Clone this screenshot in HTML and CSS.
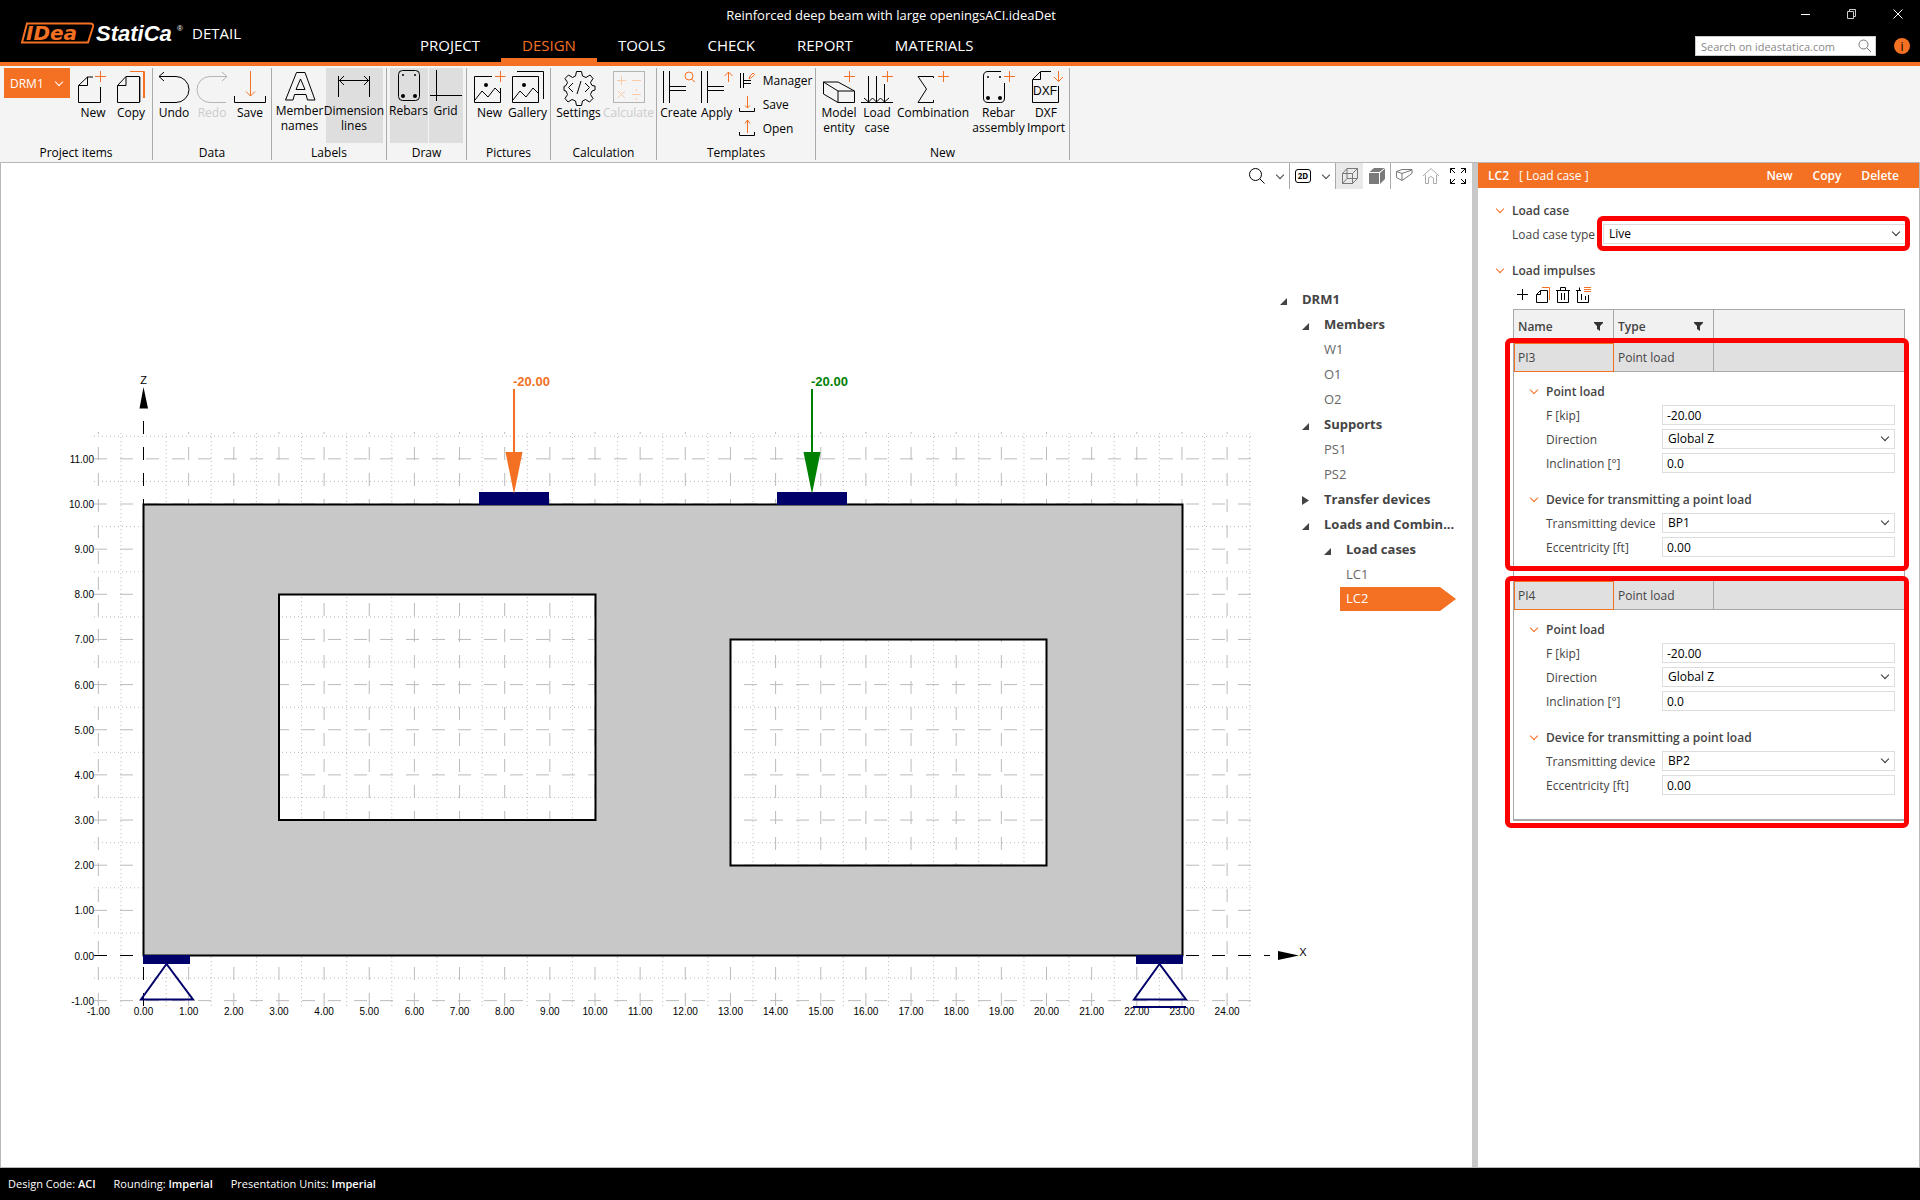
FILE: index.html
```html
<!DOCTYPE html>
<html lang="en">
<head>
    <meta charset="utf-8">
    <title>Reinforced deep beam with large openingsACI.ideaDet</title>
    <link rel="stylesheet" href="styles.css">
    <script src="script.js" defer></script>
</head>
<body>
    <header class="titlebar">
        <div class="brand">
            <svg class="logo" width="170" height="24" viewBox="0 0 170 24">
                <path d="M7 2.500H70Q74 2.500 73 6L68 21.500H2Z" fill="#000" stroke="#f47023" stroke-width="2"/>
                <text x="6" y="19" class="logo-idea">IDea</text>
                <text x="76" y="20" class="logo-statica">StatiCa</text>
                <text x="157" y="10" class="logo-reg">®</text>
            </svg>
            <span class="product">DETAIL</span>
        </div>
        <nav class="tabs">
            <a href="#">PROJECT</a>
            <a href="#" class="active">DESIGN</a>
            <a href="#">TOOLS</a>
            <a href="#">CHECK</a>
            <a href="#">REPORT</a>
            <a href="#">MATERIALS</a>
        </nav>
        <h1 class="doc-title">Reinforced deep beam with large openingsACI.ideaDet</h1>
        <div class="header-right">
            <div class="window-buttons">
                <button aria-label="Minimize"><svg width="12" height="12" viewBox="0 0 12 12"><path d="M1 6.500h9" stroke="#fff"/></svg></button>
                <button aria-label="Restore"><svg width="12" height="12" viewBox="0 0 12 12"><path d="M1.500 3.500h6v7h-6zM3.500 3.500v-2h6v7h-2" fill="none" stroke="#ccc"/></svg></button>
                <button aria-label="Close"><svg width="12" height="12" viewBox="0 0 12 12"><path d="M1.500 1.500l9 9M10.500 1.500l-9 9" stroke="#fff"/></svg></button>
            </div>
            <div class="search-row">
                <div class="search">
                    <input type="text" aria-label="Search" placeholder="Search on ideastatica.com">
                    <svg width="14" height="14" viewBox="0 0 14 14"><path d="M9 9l4 4M10 5.500a4.500 4.500 0 1 1-9 0 4.500 4.500 0 0 1 9 0z" fill="none" stroke="#777"/></svg>
                </div>
                <button class="info" aria-label="Info">i</button>
            </div>
        </div>
    </header>

    <div class="ribbon">
        <section class="group g-project">
            <div class="tools">
                <button class="project-item">DRM1 <i class="chevron"></i></button>
                <button class="tool">
                    <svg class="icon" viewBox="0 0 32 32"><path class="k" d="M16 6H10.500L1.500 14.500V31.500H23.500V16M10.500 6V14.500H1.500"/><path class="o" d="M18 5.500H29M23.500 0V11"/></svg>
                    <span>New</span>
                </button>
                <button class="tool">
                    <svg class="icon" viewBox="0 0 32 32"><path class="k" d="M11 5.500H24.500V31.500H2.500V14.500L11 5.500V14.500H2.500"/><path d="M25.500 6v25" stroke="#999"/><path class="o" d="M15 .500H29.500V27M28.500 1V27"/></svg>
                    <span>Copy</span>
                </button>
            </div>
            <h2>Project items</h2>
        </section>
        <section class="group g-data">
            <div class="tools">
                <button class="tool">
                    <svg class="icon" viewBox="0 0 32 32"><path class="k" d="M6 1L1 5.500L6 10M1 5.500H18A13 13 0 0 1 18 31.500H2"/></svg>
                    <span>Undo</span>
                </button>
                <button class="tool" disabled>
                    <svg class="icon" viewBox="0 0 32 32"><path class="g" d="M26 1L31 5.500L26 10M31 5.500H14A13 13 0 0 0 14 31.500H30"/></svg>
                    <span>Redo</span>
                </button>
                <button class="tool">
                    <svg class="icon" viewBox="0 0 32 32"><path class="k" d="M.500 25V31.500H31.500V25"/><path class="o" d="M16.500 0V25M12 20.500L16.500 25L21 20.500"/></svg>
                    <span>Save</span>
                </button>
            </div>
            <h2>Data</h2>
        </section>
        <section class="group g-labels">
            <div class="tools">
                <button class="tool toggle w-mid">
                    <svg class="icon" viewBox="0 0 32 32"><path class="k" d="M12.500 3.500H21L31 31H23.500L22 25.500H10.500L9 31H1.500ZM16.500 10L12 20.500H21Z"/></svg>
                    <span>Member names</span>
                </button>
                <button class="tool toggle on w-wide">
                    <svg class="icon" viewBox="0 0 32 32"><path class="k" d="M.500 7V28M31.500 7V28M1 11.500H31M6 7L1.500 11.500L6 16M26 7L30.500 11.500L26 16"/></svg>
                    <span>Dimension lines</span>
                </button>
            </div>
            <h2>Labels</h2>
        </section>
        <section class="group g-draw">
            <div class="tools">
                <button class="tool toggle on">
                    <svg class="icon" viewBox="0 0 32 32"><rect class="k" x="5.500" y="1.500" width="21" height="30" rx="4"/><g fill="#000"><circle cx="10" cy="6" r="1"/><circle cx="22" cy="6" r="1"/><circle cx="10" cy="27" r="2"/><circle cx="22" cy="27" r="2"/></g></svg>
                    <span>Rebars</span>
                </button>
                <button class="tool toggle on w-slim">
                    <svg class="icon" viewBox="0 0 32 32"><path class="k" d="M6.500 1V32M0 26.500H32"/></svg>
                    <span>Grid</span>
                </button>
            </div>
            <h2>Draw</h2>
        </section>
        <section class="group g-pictures">
            <div class="tools">
                <button class="tool">
                    <svg class="icon" viewBox="0 0 32 32"><path class="k" d="M18 5.500H.500V31.500H26.500V17M1 29L8 20L14 26L21 17L26 22"/><circle cx="12" cy="14" r="2"/><path class="o" d="M21 5.500H31.500M26.500 0V11"/></svg>
                    <span>New</span>
                </button>
                <button class="tool">
                    <svg class="icon" viewBox="0 0 32 32"><path class="k" d="M.500 5.500H26.500V31.500H.500ZM5 .500H31.500V28M1 29L8 20L14 26L21 17L26 22"/><circle cx="12" cy="14" r="2"/></svg>
                    <span>Gallery</span>
                </button>
            </div>
            <h2>Pictures</h2>
        </section>
        <section class="group g-calc">
            <div class="tools">
                <button class="tool w-mid">
                    <svg class="icon" viewBox="0 0 32 32"><path class="k" d="M13.500 .500h5l1 4.500 3.500 1.500 4-2.500 3 3.500-2.500 4 1.500 3 3 .500v4l-3 1-1.500 3.500 2.500 4-3.500 3.500-4-2.500-3 1.500-1 4.500h-5l-1-4.500-3.500-1.500-4 2.500-3-3.500 2.500-4-1.500-3.500-2-.500v-4l2-1 1.500-3-2.500-4 3.500-3.500 4 2.500 3-1.500zM10 12L5.500 16.500L10 21M22 12L26.500 16.500L22 21M18 10L14 23"/></svg>
                    <span>Settings</span>
                </button>
                <button class="tool w-mid" disabled>
                    <svg class="icon" viewBox="0 0 32 32"><rect class="g" x=".500" y=".500" width="31" height="31"/><path d="M4 9.500H13M8.500 5V14M19 9.500H28M5 20L12 27M12 20L5 27M19 23.500H28M23.500 18v2M23.500 27v2" fill="none" stroke="#f9cba9"/></svg>
                    <span>Calculate</span>
                </button>
            </div>
            <h2>Calculation</h2>
        </section>
        <section class="group g-templates">
            <div class="tools">
                <button class="tool">
                    <svg class="icon" viewBox="0 0 32 32"><path class="k" d="M.500 0V32M6.500 0V32M7 15.500H23M7 19.500H23"/><circle class="o" cx="26" cy="5" r="4"/><path class="o" d="M28.500 8L32 11"/></svg>
                    <span>Create</span>
                </button>
                <button class="tool">
                    <svg class="icon" viewBox="0 0 32 32"><path class="k" d="M.500 0V32M6.500 0V32M7 15.500H23M7 19.500H23"/><path class="o" d="M27.500 11V1M23.500 5L27.500 1L31.500 5"/></svg>
                    <span>Apply</span>
                </button>
                <div class="small-tools">
                    <button><svg width="16" height="16" viewBox="0 0 16 16"><path class="k" d="M1.500 1V16M4.500 1V16M5 8.500H12M5 11.500H12"/><path class="o" d="M10 7l1-3 3-3 1.500 1.500-3 3z"/></svg>Manager</button>
                    <button><svg width="16" height="16" viewBox="0 0 16 16"><path class="k" d="M.500 12V15.500H15.500V12"/><path class="o" d="M8.500 0V12M6 9.500L8.500 12L11 9.500"/></svg>Save</button>
                    <button><svg width="16" height="16" viewBox="0 0 16 16"><path class="k" d="M.500 12V15.500H15.500V12"/><path class="o" d="M8.500 13V0M6 3.500L8.500 0L11 3.500"/></svg>Open</button>
                </div>
            </div>
            <h2>Templates</h2>
        </section>
        <section class="group g-new">
            <div class="tools">
                <button class="tool">
                    <svg class="icon" viewBox="0 0 32 32"><path class="k" d="M.500 11L15 20V31.500L.500 23ZM.500 11H15L31.500 20V31.500H15M15 20H31.500"/><path class="o" d="M21 5.500H32M26.500 0V11"/></svg>
                    <span>Model entity</span>
                </button>
                <button class="tool">
                    <svg class="icon" viewBox="0 0 32 32"><path class="k" d="M0 31.500H32M7.500 5V31M15.500 5V31M23.500 13V31M3 27L7.500 31L11.500 27L15.500 31L19.500 27L23.500 31L28 27"/><path class="o" d="M21 5.500H32M26.500 0V11"/></svg>
                    <span>Load case</span>
                </button>
                <button class="tool w-big">
                    <svg class="icon" viewBox="0 0 32 32"><path class="k" d="M16.500 7V5.500H1L9.500 18L1 31.500H16.500V29"/><path class="o" d="M21 5.500H32M26.500 0V11"/></svg>
                    <span>Combination</span>
                </button>
                <button class="tool w-wide">
                    <svg class="icon" viewBox="0 0 32 32"><path class="k" d="M18 .500H5Q.500 .500 .500 5V27Q.500 31.500 5 31.500H17.500Q21.500 31.500 21.500 27V12"/><g fill="#000"><circle cx="5" cy="6" r="1"/><circle cx="17" cy="6" r="1"/><circle cx="5" cy="27" r="2"/><circle cx="17" cy="27" r="2"/></g><path class="o" d="M21 5.500H32M26.500 0V11"/></svg>
                    <span>Rebar assembly</span>
                </button>
                <button class="tool">
                    <svg class="icon" viewBox="0 0 32 32"><path class="k" d="M21 .500H10.500L2.500 8.500V31.500H28.500V15M10.500 1V8.500H3"/><text x="15" y="24" class="dxf">DXF</text><path class="o" d="M28.500 0V10M24 6L28.500 10.500L33 6"/></svg>
                    <span>DXF Import</span>
                </button>
            </div>
            <h2>New</h2>
        </section>
    </div>

    <main class="workspace">
        <section class="viewport">
            <div class="view-tools">
                <button aria-label="Zoom"><svg width="18" height="18" viewBox="0 0 18 18"><path class="k" d="M12 12L16.500 16.500M13.500 7.500a6 6 0 1 1-12 0 6 6 0 0 1 12 0z"/></svg></button>
                <button class="drop" aria-label="Zoom options"><i class="chevron"></i></button>
                <button class="split" aria-label="2D view"><span class="two-d">2D</span></button>
                <button class="drop" aria-label="View options"><i class="chevron"></i></button>
                <button class="split pressed" aria-label="Wireframe"><svg width="18" height="18" viewBox="0 0 18 18"><path class="m" d="M1.500 6.500H11.500V16.500H1.500ZM1.500 6.500L6 1.500H16.500L11.500 6.500M16.500 1.500V11.500L11.500 16.500M6 1.500V11.500H16.500M6 11.500L1.500 16.500"/></svg></button>
                <button aria-label="Solid"><svg width="18" height="18" viewBox="0 0 18 18"><path d="M1 6H11V17H1ZM1.500 5L6 1H16.500L11.500 5ZM12 6L17 1.500V12L12 17Z" fill="#7a7a7a"/></svg></button>
                <button class="split" aria-label="Clip"><svg width="18" height="18" viewBox="0 0 18 18"><path class="m" d="M1.500 4.500L7 2.500H17V6.500L7 13.500L1.500 10.500ZM1.500 4.500L7 6.500V13M7 6.500L17 3"/></svg></button>
                <button aria-label="Home"><svg width="18" height="18" viewBox="0 0 18 18"><path d="M1 9L9 1.500L17 9M3.500 8V16.500H6.500V11Q9 8 11.500 11V16.500H14.500V8" fill="none" stroke="#aaa"/></svg></button>
                <button aria-label="Fit to window"><svg width="18" height="18" viewBox="0 0 18 18"><path d="M1.500 6V1.500H6M1.500 1.500L6 6M12 1.500H16.500V6M16.500 1.500L12 6M1.500 12V16.500H6M1.500 16.500L6 12M12 16.500H16.500V12M16.500 16.500L12 12" fill="none" stroke="#000"/></svg></button>
            </div>

            <svg class="model" viewBox="0 0 1471 978" preserveAspectRatio="xMinYMin meet">
                <!-- shifts page pixels into the drawing area -->
                <g transform="translate(-1 -189)">
                    <path id="minorGrid" class="minor"/>
                    <path id="majorGrid" class="major"/>
                    <path class="axis" d="M94 955.500H1270M143.500 1006V408"/>
                    <path class="wall" fill-rule="evenodd" d="M143.500 504.500H1182.500V955.500H143.500ZM279 594.500V820H595.500V594.500ZM730.500 639.500V865.500H1046.500V639.500Z"/>
                    <path d="M1278 951L1299 955.500L1278 960ZM139.500 408.500L143.500 387L148 408.500Z"/>
                    <text class="axis-name" x="143.500" y="384">Z</text>
                    <text class="axis-name" x="1303" y="956">X</text>
                    <g id="gridLabels"></g>

                    <g class="plate">
                        <rect x="479" y="492" width="70" height="13"/>
                        <rect x="777" y="492" width="70" height="13"/>
                        <rect x="143" y="955" width="47" height="9"/>
                        <rect x="1136" y="955" width="47" height="9"/>
                    </g>
                    <path class="support" d="M166.500 964L141 999.500H193ZM1159.500 964L1134 999.500H1186ZM1133 1007H1186"/>

                    <g class="load selected">
                        <path d="M513 389H515V452H522.500L514 494L505.500 452H513Z"/>
                        <text x="513" y="386">-20.00</text>
                    </g>
                    <g class="load">
                        <path d="M811 389H813V452H820.500L812 494L803.500 452H811Z"/>
                        <text x="811" y="386">-20.00</text>
                    </g>
                </g>
            </svg>

            <ul class="tree">
                <li class="branch"><b>DRM1</b>
                    <ul>
                        <li class="branch"><b>Members</b>
                            <ul class="leaves"><li>W1</li><li>O1</li><li>O2</li></ul>
                        </li>
                        <li class="branch"><b>Supports</b>
                            <ul class="leaves"><li>PS1</li><li>PS2</li></ul>
                        </li>
                        <li class="branch closed"><b>Transfer devices</b></li>
                        <li class="branch"><b>Loads and Combin...</b>
                            <ul>
                                <li class="branch"><b>Load cases</b>
                                    <ul class="leaves"><li>LC1</li><li class="current">LC2</li></ul>
                                </li>
                            </ul>
                        </li>
                    </ul>
                </li>
            </ul>
        </section>

        <aside class="panel">
            <div class="panel-head">
                <b>LC2</b>
                <span>[ Load case ]</span>
                <div class="panel-actions">
                    <button>New</button>
                    <button>Copy</button>
                    <button>Delete</button>
                </div>
            </div>

            <section class="props">
                <h3><i class="chevron"></i>Load case</h3>
                <div class="prop type-prop">
                    <label for="lcType">Load case type</label>
                    <div class="select"><select id="lcType"><option>Live</option></select><i class="chevron"></i><div class="mark mark-field"></div></div>
                </div>
            </section>

            <section class="props">
                <h3><i class="chevron"></i>Load impulses</h3>
                <div class="list-tools">
                    <button aria-label="Add"><svg width="16" height="16" viewBox="0 0 16 16"><path class="k" d="M2 7.500H13M7.500 2V13"/></svg></button>
                    <button aria-label="Copy"><svg width="16" height="16" viewBox="0 0 16 16"><path class="k" d="M5.500 3.500H12.500V15.500H1.500V7.500L5.500 3.500V7.500H1.500"/><path class="o" d="M7 .500H14.500V13"/></svg></button>
                    <button aria-label="Delete"><svg width="16" height="16" viewBox="0 0 16 16"><path class="k" d="M1 3.500H15M5.500 3V.500H10.500V3M2.500 4V15.500H13.500V4M6.500 6V13M9.500 6V13"/></svg></button>
                    <button aria-label="Delete all"><svg width="16" height="16" viewBox="0 0 16 16"><path class="k" d="M1 3.500H6M4.500 3V.500M2.500 4V15.500H13.500V8M6.500 7V13M10.500 9V13"/><path class="o" d="M9 .500H16M9 2.500H16M9 4.500H16"/></svg></button>
                </div>

                <table class="impulses">
                    <thead>
                        <tr>
                            <th>Name <svg width="9" height="9" viewBox="0 0 9 9"><path d="M0 0H9V1L6 4V9L3 7V4L0 1Z"/></svg></th>
                            <th>Type <svg width="9" height="9" viewBox="0 0 9 9"><path d="M0 0H9V1L6 4V9L3 7V4L0 1Z"/></svg></th>
                            <th class="rest"></th>
                        </tr>
                    </thead>
                    <tbody>
                        <tr class="impulse"><td class="key">PI3</td><td>Point load</td><td></td></tr>
                        <tr>
                            <td class="detail" colspan="3">
                                <h4><i class="chevron"></i>Point load</h4>
                                <div class="prop"><label for="f3">F [kip]</label><input type="text" id="f3" value="-20.00"></div>
                                <div class="prop"><label for="d3">Direction</label><div class="select"><select id="d3"><option>Global Z</option></select><i class="chevron"></i></div></div>
                                <div class="prop"><label for="i3">Inclination [°]</label><input type="text" id="i3" value="0.0"></div>
                                <h4><i class="chevron"></i>Device for transmitting a point load</h4>
                                <div class="prop"><label for="t3">Transmitting device</label><div class="select"><select id="t3"><option>BP1</option></select><i class="chevron"></i></div></div>
                                <div class="prop"><label for="e3">Eccentricity [ft]</label><input type="text" id="e3" value="0.00"></div>
                                <div class="mark"></div>
                            </td>
                        </tr>
                        <tr class="impulse"><td class="key">PI4</td><td>Point load</td><td></td></tr>
                        <tr>
                            <td class="detail last" colspan="3">
                                <h4><i class="chevron"></i>Point load</h4>
                                <div class="prop"><label for="f4">F [kip]</label><input type="text" id="f4" value="-20.00"></div>
                                <div class="prop"><label for="d4">Direction</label><div class="select"><select id="d4"><option>Global Z</option></select><i class="chevron"></i></div></div>
                                <div class="prop"><label for="i4">Inclination [°]</label><input type="text" id="i4" value="0.0"></div>
                                <h4><i class="chevron"></i>Device for transmitting a point load</h4>
                                <div class="prop"><label for="t4">Transmitting device</label><div class="select"><select id="t4"><option>BP2</option></select><i class="chevron"></i></div></div>
                                <div class="prop"><label for="e4">Eccentricity [ft]</label><input type="text" id="e4" value="0.00"></div>
                                <div class="mark"></div>
                            </td>
                        </tr>
                    </tbody>
                </table>
            </section>
        </aside>
    </main>

    <footer class="status">
        <span>Design Code: <b>ACI</b></span>
        <span>Rounding: <b>Imperial</b></span>
        <span>Presentation Units: <b>Imperial</b></span>
    </footer>
</body>
</html>
```
FILE: styles.css
```css
* {
    box-sizing: border-box;
}
body {
    margin: 0;
    min-height: 100vh;
    display: flex;
    flex-direction: column;
    background: #fff;
    font: 12px/15px "Open Sans", "Noto Sans", sans-serif;
    color: #000;
}
h1, h2, h3, h4, ul {
    margin: 0;
    padding: 0;
    font-size: inherit;
    font-weight: normal;
}
button {
    padding: 0;
    border: none;
    background: none;
    font: inherit;
    color: inherit;
}
a {
    color: inherit;
    text-decoration: none;
}
svg {
    display: block;
    overflow: visible;
    flex: none;
}
.k, .o, .g, .m {
    fill: none;
    stroke: #000;
}
.o {
    stroke: #f47023;
}
.g {
    stroke: #b4b4b4;
}
.m {
    stroke: #777;
}
.chevron {
    display: block;
    flex: none;
    width: 6px;
    height: 6px;
    margin: 0 1px 3px;
    border: solid currentColor;
    border-width: 0 1px 1px 0;
    transform: rotate(45deg);
}

/* title bar */
.titlebar {
    position: relative;
    display: flex;
    height: 66px;
    background: #000;
    border-bottom: 4px solid #f47023;
    color: #fff;
}
.brand {
    display: flex;
    align-items: center;
    gap: 2px;
    width: 399px;
    padding: 4px 0 0 20px;
}
.logo-idea {
    font: italic bold 20px "DejaVu Sans", sans-serif;
    fill: #f47023;
}
.logo-statica {
    font: italic bold 22px "Liberation Sans", sans-serif;
    fill: #fff;
}
.logo-reg {
    font: 8px "Liberation Sans", sans-serif;
    fill: #fff;
}
.product {
    font-size: 15px;
    line-height: 20px;
}
.tabs {
    display: flex;
    align-items: flex-end;
    margin-bottom: -4px;
}
.tabs a {
    height: 32px;
    padding: 0 21px;
    font-size: 15px;
    line-height: 22px;
    border-bottom: 8px solid transparent;
}
.tabs .active {
    color: #f47023;
    border-color: #f47023;
}
.doc-title {
    position: absolute;
    top: 5px;
    left: 0;
    right: 138px;
    text-align: center;
    font-size: 13px;
    line-height: 20px;
}
.header-right {
    margin-left: auto;
    padding-right: 10px;
    display: flex;
    flex-direction: column;
    align-items: flex-end;
}
.window-buttons {
    display: flex;
    gap: 34px;
    height: 36px;
    padding: 8px 6px 0 0;
}
.window-buttons button {
    height: 12px;
}
.search-row {
    display: flex;
    align-items: center;
    gap: 18px;
}
.search {
    display: flex;
    align-items: center;
    width: 181px;
    height: 20px;
    padding: 0 3px 0 5px;
    background: #fff;
    border: 1px solid #ccc;
}
.search input {
    flex: 1;
    min-width: 0;
    padding: 0;
    border: none;
    font: inherit;
    font-size: 11px;
}
.search input::placeholder {
    color: #888;
}
.info {
    width: 16px;
    height: 16px;
    border-radius: 50%;
    background: #f47023;
    color: #000;
}

/* ribbon */
.ribbon {
    display: flex;
    height: 97px;
    padding-top: 2px;
    background: #f4f4f4;
    border-bottom: 1px solid #b8b8b8;
}
.group {
    display: flex;
    flex-direction: column;
    height: 92px;
    border-right: 1px solid #aaa;
}
.group h2 {
    margin-top: auto;
    text-align: center;
}
.g-project { width: 153px; }
.g-data { width: 119px; }
.g-labels { width: 115px; }
.g-draw { width: 80px; }
.g-pictures { width: 84px; }
.g-calc { width: 106px; }
.g-templates { width: 159px; }
.g-new { width: 254px; }
.tools {
    display: flex;
    justify-content: center;
    align-items: flex-start;
}
.tool {
    display: flex;
    flex-direction: column;
    align-items: center;
    gap: 2px;
    width: 38px;
    height: 75px;
    padding-top: 3px;
}
.w-slim { width: 34px; }
.w-mid { width: 50px; }
.w-wide { width: 57px; }
.w-big { width: 74px; }
.toggle {
    padding-top: 1px;
    margin-right: 1px;
}
.on {
    background: #dedede;
}
.tool:disabled {
    color: #ccc;
}
.icon {
    width: 32px;
    height: 32px;
}
.dxf {
    font: 12px "Liberation Sans", sans-serif;
    text-anchor: middle;
}
.project-item {
    display: flex;
    align-items: center;
    justify-content: space-between;
    width: 66px;
    height: 30px;
    margin: 0 4px 0 2px;
    padding: 0 7px 0 6px;
    background: #f47023;
    color: #fff;
}
.small-tools {
    display: flex;
    flex-direction: column;
    gap: 8px;
    padding: 4px 0 0 3px;
}
.small-tools button {
    display: flex;
    align-items: center;
    gap: 8px;
    height: 16px;
}

/* workspace */
.workspace {
    flex: 1;
    display: flex;
    border: solid #b8b8b8;
    border-width: 0 1px 1px;
}
.viewport {
    position: relative;
    flex: 1;
    min-width: 0;
}
.view-tools {
    display: flex;
    justify-content: flex-end;
    height: 26px;
    padding-right: 1px;
}
.view-tools button {
    display: flex;
    align-items: center;
    justify-content: center;
    width: 27px;
    height: 26px;
}
.view-tools .drop {
    width: 19px;
    color: #444;
}
.split {
    border-left: 1px solid #aaa;
}
.view-tools .pressed {
    width: 28px;
    background: #e9e9e9;
}
.two-d {
    width: 16px;
    height: 14px;
    border: 1px solid #000;
    border-radius: 3px;
    font-size: 8px;
    font-weight: bold;
    line-height: 12px;
}
.model {
    width: 100%;
}
.minor, .major {
    fill: none;
    stroke: #bbb;
}
.minor {
    stroke-dasharray: 1 3;
}
.major, .axis {
    stroke-dasharray: 13 13;
}
.axis {
    fill: none;
    stroke: #000;
}
.wall {
    fill: #c8c8c8;
    stroke: #000;
    stroke-width: 2px;
}
.grid-label, .axis-name {
    font-family: "Liberation Sans", sans-serif;
    font-size: 10px;
    text-anchor: middle;
}
.grid-label.left {
    text-anchor: end;
}
.axis-name {
    font-size: 11px;
}
.plate {
    fill: #00006a;
}
.support {
    fill: none;
    stroke: #00006a;
    stroke-width: 2px;
}
.load {
    fill: #008000;
    font: bold 13px "Liberation Sans", sans-serif;
}
.load.selected {
    fill: #f47023;
}

.tree {
    position: absolute;
    top: 124px;
    right: 16px;
    width: 176px;
    list-style: none;
    font-size: 13px;
    line-height: 25px;
    color: #444;
    white-space: nowrap;
}
.tree ul {
    list-style: none;
}
.branch {
    position: relative;
    padding-left: 22px;
}
.branch::before {
    content: "";
    position: absolute;
    top: 11px;
    left: 0;
    width: 7px;
    height: 7px;
    background: #444;
    clip-path: polygon(100% 0, 100% 100%, 0 100%);
}
.closed::before {
    top: 9px;
    height: 9px;
    clip-path: polygon(0 0, 100% 50%, 0 100%);
}
.leaves li {
    color: #666;
}
.leaves .current {
    height: 24px;
    margin-left: -6px;
    padding-left: 6px;
    line-height: 23px;
    background: #f47023;
    color: #fff;
    clip-path: polygon(0 0, calc(100% - 16px) 0, 100% 50%, calc(100% - 16px) 100%, 0 100%);
}

/* properties */
.panel {
    width: 447px;
    border-left: 6px solid #c8c8c8;
    color: #444;
}
.panel-head {
    display: flex;
    align-items: center;
    gap: 10px;
    height: 25px;
    padding: 0 20px 0 10px;
    background: #f47023;
    color: #fff;
}
.panel-head b {
    font-weight: 600;
}
.panel-actions {
    display: flex;
    gap: 20px;
    margin-left: auto;
    font-weight: 600;
}
.props {
    padding: 12px 13px 0 18px;
}
.props h3, .detail h4 {
    display: flex;
    align-items: center;
    gap: 8px;
    height: 20px;
    font-weight: 600;
}
.props h3 .chevron, .detail h4 .chevron {
    color: #f47023;
}
.prop {
    display: grid;
    grid-template-columns: 116px 1fr;
    align-items: center;
    height: 20px;
    margin-bottom: 4px;
}
.type-prop {
    grid-template-columns: 91px 1fr;
    margin: 4px 0 4px 16px;
}
.prop input, .prop select {
    width: 100%;
    height: 20px;
    margin: 0;
    padding: 0 4px;
    border: 1px solid #ddd;
    border-radius: 0;
    background: #fff;
    font: inherit;
    color: #000;
    appearance: none;
}
.prop select {
    display: block;
    padding-left: 5px;
    padding-bottom: 2px;
}
.select {
    position: relative;
}
.select > .chevron {
    position: absolute;
    top: 5px;
    right: 6px;
    color: #333;
}
.list-tools {
    display: flex;
    gap: 4px;
    height: 29px;
    padding: 7px 0 0 19px;
}
.list-tools button {
    height: 16px;
}
.impulses {
    width: 392px;
    margin-left: 17px;
    border: solid #a8a8a8;
    border-width: 1px 1px 0;
    border-spacing: 0;
    table-layout: fixed;
}
.impulses th, .impulses td {
    padding: 0 4px;
    text-align: left;
}
.impulses th {
    width: 100px;
    height: 33px;
    background: #f1f1f1;
    border-right: 1px solid #a8a8a8;
    font-weight: 600;
}
.impulses .rest {
    width: auto;
}
.impulses th svg {
    float: right;
    margin: 3px 6px 0 0;
    fill: #333;
}
.impulse td {
    height: 29px;
    background: #e0e0e0;
    border-right: 1px solid #a8a8a8;
    border-bottom: 1px solid #a8a8a8;
}
.impulses th:last-child, .impulse td:last-child {
    border-right: none;
}
.impulse .key {
    padding-left: 3px;
    border: 1px solid #f47023;
}
.impulses .detail {
    position: relative;
    height: 209px;
    padding: 9px 9px 20px 16px;
    vertical-align: top;
}
.detail h4 + .prop {
    margin-top: 4px;
}
.prop + h4 {
    margin-top: 16px;
}
.detail .prop {
    padding-left: 16px;
}
.detail .prop + .mark {
    top: -34px;
    right: -5px;
    bottom: 10px;
    left: -9px;
}
.impulses .last {
    height: 211px;
    border-bottom: 2px solid #a8a8a8;
}
.last .prop + .mark {
    bottom: -9px;
}
/* red call-out frames */
.mark {
    position: absolute;
    border: 5px solid #f00;
    border-radius: 6px;
    pointer-events: none;
}
.mark-field {
    top: -8px;
    right: -4px;
    bottom: -7px;
    left: -6px;
}

.status {
    display: flex;
    gap: 18px;
    height: 32px;
    padding-left: 8px;
    background: #000;
    color: #fff;
    font-size: 11px;
    line-height: 31px;
}
.status b {
    font-weight: 600;
}
```
FILE: script.js
```js
// model grid: 1 ft spacing, labelled axes
var X0 = 143.5, Y0 = 955.5, STEP = 45.15;
var LEFT = 94, RIGHT = 1254, TOP = 432, BOTTOM = 1006;

function gridLines(from, toX, toY) {
    var d = '';
    for (var x = from; x <= toX; x++) {
        d += 'M' + (X0 + x * STEP) + ' ' + BOTTOM + 'V' + TOP;
    }
    for (var y = from; y <= toY; y++) {
        d += 'M' + LEFT + ' ' + (Y0 - y * STEP) + 'H' + RIGHT;
    }
    return d;
}

function addLabel(text, x, y, cls) {
    var t = document.createElementNS('http://www.w3.org/2000/svg', 'text');
    t.setAttribute('x', x);
    t.setAttribute('y', y);
    t.setAttribute('class', cls);
    t.textContent = text;
    document.getElementById('gridLabels').appendChild(t);
}

document.getElementById('majorGrid').setAttribute('d', gridLines(-1, 24, 11));
document.getElementById('minorGrid').setAttribute('d', gridLines(-0.5, 24.5, 11.5));

for (var i = -1; i <= 24; i++) {
    addLabel(i.toFixed(2), X0 + i * STEP, 1015, 'grid-label');
}
for (var j = -1; j <= 11; j++) {
    addLabel(j.toFixed(2), 94, Y0 - j * STEP + 4, 'grid-label left');
}
```
